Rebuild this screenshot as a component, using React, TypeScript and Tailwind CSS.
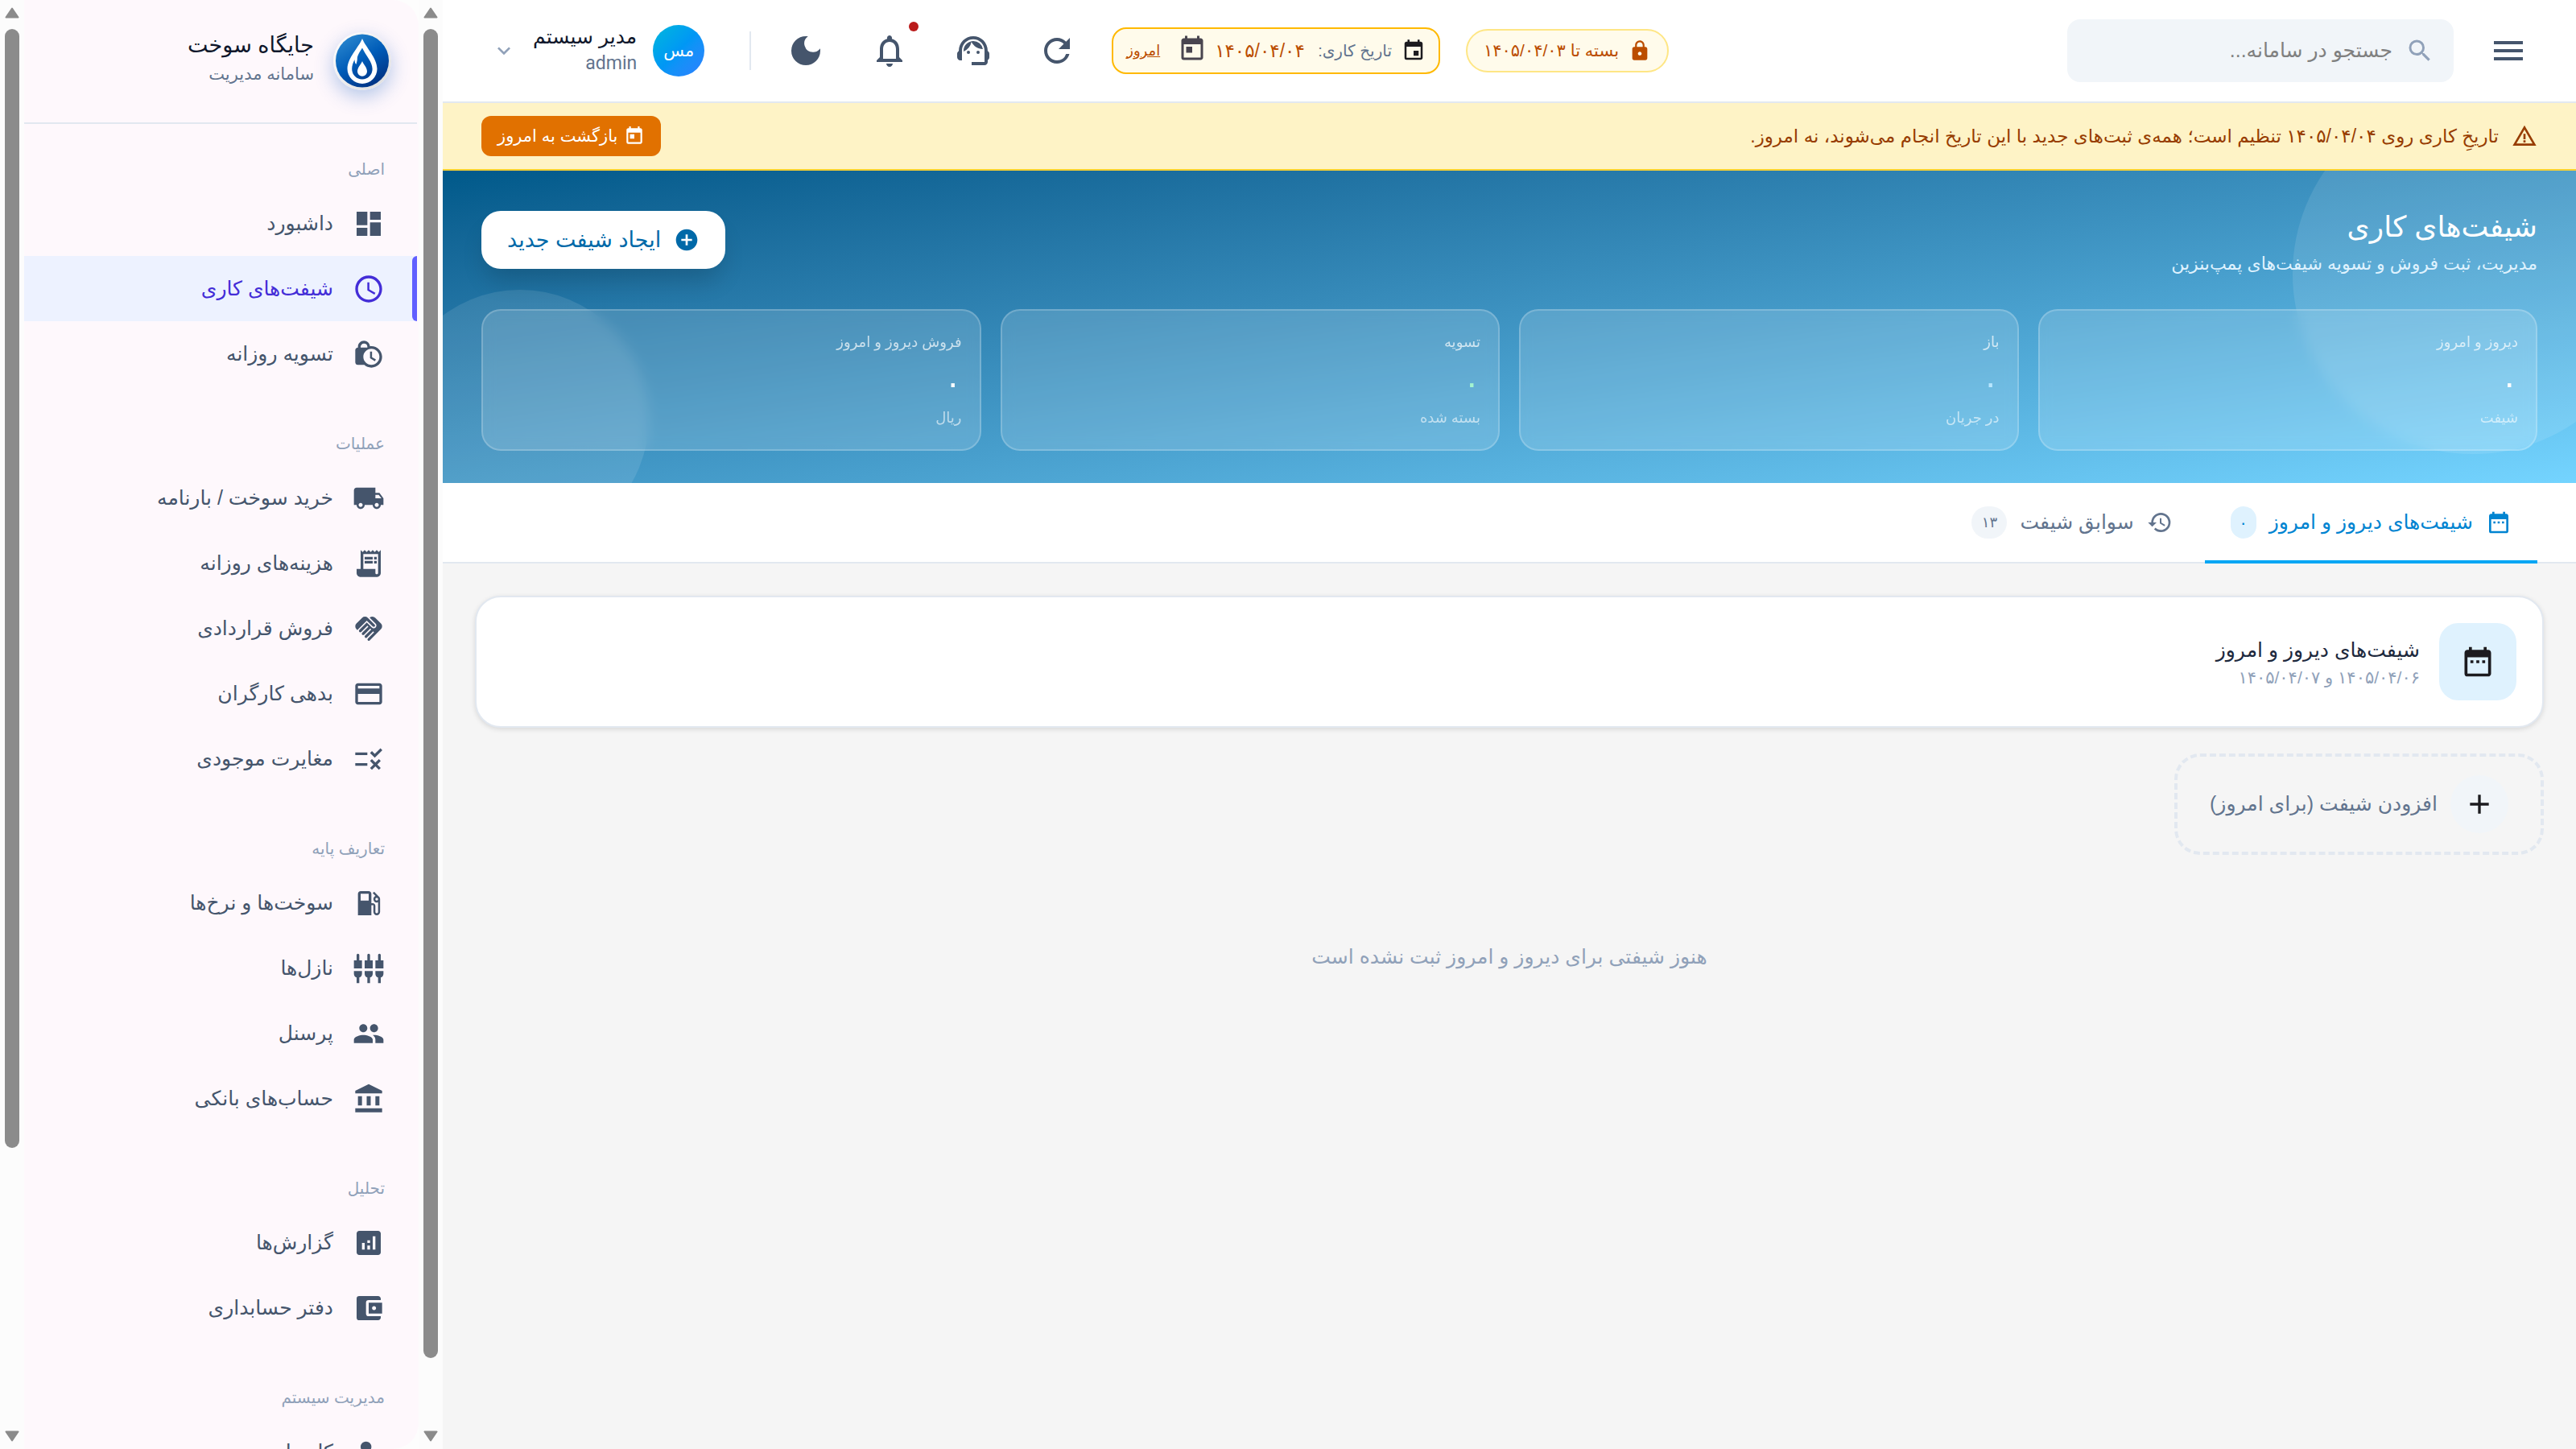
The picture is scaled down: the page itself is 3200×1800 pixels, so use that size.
import React from "react";
import type { IconType } from "react-icons";
import {
  MdAccountBalance,
  MdAccountBalanceWallet,
  MdAdd,
  MdAddCircle,
  MdAnalytics,
  MdCreditCard,
  MdDarkMode,
  MdDashboard,
  MdDateRange,
  MdEvent,
  MdExpandMore,
  MdHandshake,
  MdHistory,
  MdLocalGasStation,
  MdLocalShipping,
  MdLock,
  MdLockClock,
  MdManageAccounts,
  MdMenu,
  MdNotificationsNone,
  MdPeople,
  MdReceiptLong,
  MdRefresh,
  MdRule,
  MdSchedule,
  MdSearch,
  MdSettingsInputComponent,
  MdSupportAgent,
  MdToday,
  MdWarningAmber,
} from "react-icons/md";

type NavItem = { label: string; icon: IconType; active?: boolean };
type NavGroup = { title: string; items: NavItem[] };

const NAV: NavGroup[] = [
  {
    title: "اصلی",
    items: [
      { label: "داشبورد", icon: MdDashboard },
      { label: "شیفت‌های کاری", icon: MdSchedule, active: true },
      { label: "تسویه روزانه", icon: MdLockClock },
    ],
  },
  {
    title: "عملیات",
    items: [
      { label: "خرید سوخت / بارنامه", icon: MdLocalShipping },
      { label: "هزینه‌های روزانه", icon: MdReceiptLong },
      { label: "فروش قراردادی", icon: MdHandshake },
      { label: "بدهی کارگران", icon: MdCreditCard },
      { label: "مغایرت موجودی", icon: MdRule },
    ],
  },
  {
    title: "تعاریف پایه",
    items: [
      { label: "سوخت‌ها و نرخ‌ها", icon: MdLocalGasStation },
      { label: "نازل‌ها", icon: MdSettingsInputComponent },
      { label: "پرسنل", icon: MdPeople },
      { label: "حساب‌های بانکی", icon: MdAccountBalance },
    ],
  },
  {
    title: "تحلیل",
    items: [
      { label: "گزارش‌ها", icon: MdAnalytics },
      { label: "دفتر حسابداری", icon: MdAccountBalanceWallet },
    ],
  },
  {
    title: "مدیریت سیستم",
    items: [{ label: "کاربران", icon: MdManageAccounts }],
  },
];

const STATS = [
  { label: "دیروز و امروز", value: "۰", unit: "شیفت", tone: "text-white" },
  { label: "باز", value: "۰", unit: "در جریان", tone: "text-[#b8e6fe]" },
  { label: "تسویه", value: "۰", unit: "بسته شده", tone: "text-[#a4f4cf]" },
  { label: "فروش دیروز و امروز", value: "۰", unit: "ریال", tone: "text-white" },
];

const HEADER_ACTIONS: { label: string; icon: IconType; dot?: boolean }[] = [
  { label: "بارگذاری دوباره", icon: MdRefresh },
  { label: "پشتیبانی", icon: MdSupportAgent },
  { label: "اعلان‌ها", icon: MdNotificationsNone, dot: true },
  { label: "حالت تیره", icon: MdDarkMode },
];

function Logo() {
  return (
    <svg viewBox="0 0 72 72" className="size-[72px] shrink-0 rounded-full shadow-[0_8px_24px_rgba(0,80,190,0.3)]" aria-hidden="true">
      <defs>
        <linearGradient id="logoBlue" x1="0.15" y1="0" x2="0.75" y2="1">
          <stop offset="0" stopColor="#2d8ad0" />
          <stop offset="0.5" stopColor="#005cb8" />
          <stop offset="1" stopColor="#003080" />
        </linearGradient>
        <linearGradient id="logoRing" x1="0" y1="0" x2="1" y2="1">
          <stop offset="0" stopColor="#ffffff" />
          <stop offset="1" stopColor="#dcdcdc" />
        </linearGradient>
      </defs>
      <circle cx="36" cy="36" r="36" fill="url(#logoRing)" />
      <circle cx="36" cy="35.5" r="33" fill="url(#logoBlue)" />
      <path
        fill="#fff"
        fillRule="evenodd"
        d="M36 8C40.500 19 54.500 32 54.500 45.500A18.500 18.500 0 0 1 17.500 45.500C17.500 32 31.500 19 36 8ZM36 19.500C32 26 29.800 29 29.800 33.500C29.800 35.500 29 38 28.300 40C27 38.500 26.500 36.500 26.500 34C24.500 38 23.200 41.500 23.200 45.800A12.700 12.700 0 0 0 48.600 45.800C48.600 37 40.500 29 36 19.500Z"
      />
      <path fill="#fff" d="M36 36C37.500 40 42 43.500 42 48.800A6 6 0 0 1 30 48.800C30 43.500 34.500 40 36 36Z" />
    </svg>
  );
}

function ScrollTrack({ thumb }: { thumb: string }) {
  return (
    <div aria-hidden="true" className="flex w-[30px] shrink-0 flex-col items-center justify-between bg-[#fcfcfc] py-[9px]">
      <div className="flex min-h-0 flex-1 flex-col items-center gap-[13px]">
        <svg viewBox="0 0 18 14" className="h-[14px] w-[18px] shrink-0">
          <path d="M9 1.500L16.500 12.500H1.500Z" fill="#8b8b8b" stroke="#8b8b8b" strokeWidth="2" strokeLinejoin="round" />
        </svg>
        <div className={"w-[18px] rounded-full bg-[#8b8b8b] " + thumb} />
      </div>
      <svg viewBox="0 0 18 14" className="h-[14px] w-[18px] shrink-0">
        <path d="M9 12.500L16.500 1.500H1.500Z" fill="#8b8b8b" stroke="#8b8b8b" strokeWidth="2" strokeLinejoin="round" />
      </svg>
    </div>
  );
}

function Sidebar() {
  return (
    <aside className="flex h-full shrink-0 bg-[#fdfdfd]">
      <ScrollTrack thumb="h-[93.4%]" />
      <div className="flex w-[490px] flex-col overflow-hidden rounded-r-[32px] bg-[#fef8fc] pr-[2px]">
        <div className="flex h-[154px] shrink-0 items-start gap-6 border-b-2 border-[#e2e8f0] px-8 pt-10">
          <Logo />
          <div className="flex flex-col">
            <span className="text-[27px] leading-[32px] text-[#0f172b]">جایگاه سوخت</span>
            <span className="text-[21px] leading-[40px] text-[#62748e]">سامانه مدیریت</span>
          </div>
        </div>
        <nav className="flex shrink-0 flex-col">
          {NAV.map((group) => (
            <section key={group.title}>
              <h2 className="px-10 pt-10 pb-[11px] text-[20px] leading-[32px] text-[#90a1b9]">{group.title}</h2>
              <ul className="flex flex-col pb-[15px]">
                {group.items.map(({ label, icon: Icon, active }) => (
                  <li key={label}>
                    <a
                      href="#"
                      aria-current={active ? "page" : undefined}
                      className={
                        active
                          ? "relative flex h-[81px] items-center gap-6 bg-[#edf2ff] px-10 text-[25px] text-[#432dd7]"
                          : "relative flex h-[81px] items-center gap-6 px-10 text-[25px] text-[#45556c]"
                      }
                    >
                      {active && <span className="absolute inset-y-0 right-0 w-[6px] rounded-l-md bg-[#615fff]" />}
                      <Icon className="size-10 shrink-0" />
                      <span>{label}</span>
                    </a>
                  </li>
                ))}
              </ul>
            </section>
          ))}
        </nav>
      </div>
      <ScrollTrack thumb="h-[78.6%]" />
    </aside>
  );
}

function Header() {
  return (
    <header className="flex h-32 shrink-0 items-center border-b-2 border-[#e2e8f0] bg-white pr-9 pl-[60px]">
      <button type="button" aria-label="منو" className="grid size-24 place-items-center text-[#45556c]">
        <MdMenu className="size-12" />
      </button>
      <label className="mr-5 flex h-[78px] w-[480px] items-center gap-4 rounded-2xl bg-[#f1f5f9] px-6">
        <MdSearch className="size-9 shrink-0 text-[#90a1b9]" />
        <input
          type="text"
          aria-label="جستجو"
          placeholder="جستجو در سامانه..."
          className="min-w-0 flex-1 bg-transparent text-[25px] text-[#45556c] outline-none placeholder:text-[#808080]"
        />
      </label>
      <div className="flex-1" />
      <span className="flex h-[54px] items-center gap-3 rounded-full border-2 border-[#fee685] bg-[#fffbeb] px-5 text-[21px] text-[#bb4d00]">
        <MdLock className="size-7" />
        بسته تا ۱۴۰۵/۰۴/۰۳
      </span>
      <div className="mr-8 ml-5 flex h-[58px] items-center rounded-[18px] border-2 border-[#ffb900] bg-[#fffbeb] px-4">
        <MdEvent className="size-[30px] text-[#1c1b1f]" />
        <label htmlFor="work-date" className="mr-3 text-[20px] text-[#62748e]">
          تاریخ کاری:
        </label>
        <input
          id="work-date"
          type="text"
          dir="ltr"
          defaultValue="۱۴۰۵/۰۴/۰۴"
          className="mr-3 w-[116px] bg-transparent text-[23px] text-[#bb4d00] outline-none"
        />
        <button type="button" aria-label="انتخاب تاریخ" className="mr-1 grid size-12 place-items-center pb-1 text-[#49454f]">
          <MdToday className="size-9" />
        </button>
        <button type="button" className="mr-4 text-[18px] text-[#bb4d00] underline">
          امروز
        </button>
      </div>
      <div className="flex items-center gap-2">
        {HEADER_ACTIONS.map(({ label, icon: Icon, dot }) => (
          <button key={label} type="button" aria-label={label} className="relative grid size-24 place-items-center text-[#45556c]">
            <Icon className="size-12" />
            {dot && <span className="absolute top-3 right-3 size-3 rounded-full bg-[#ba1a1a]" />}
          </button>
        ))}
      </div>
      <div className="mr-5 h-12 w-[2px] bg-[#e2e8f0]" />
      <button type="button" className="mr-14 flex items-center gap-5">
        <span className="grid size-16 place-items-center rounded-full bg-linear-to-br from-[#00b8db] via-[#0097f5] to-[#2b7fff] text-[21px] text-white">مس</span>
        <span className="flex flex-col items-start">
          <span className="text-[25px] leading-[32px] text-[#0f172b]">مدیر سیستم</span>
          <span className="font-[Roboto,sans-serif] text-[23px] leading-[36px] text-[#62748e]">admin</span>
        </span>
        <MdExpandMore className="size-8 text-[#90a1b9]" />
      </button>
    </header>
  );
}

function DateBanner() {
  return (
    <div className="flex h-[84px] shrink-0 items-center gap-4 border-b-2 border-[#ffd230] bg-[#fef3c6] px-12 text-[#973c00]">
      <MdWarningAmber className="size-8 shrink-0" />
      <p className="flex-1 text-[23px]">
        تاریخِ کاری روی ۱۴۰۵/۰۴/۰۴ تنظیم است؛ همه‌ی ثبت‌های جدید با این تاریخ انجام می‌شوند، نه امروز.
      </p>
      <button type="button" className="flex h-[50px] items-center gap-2 rounded-xl bg-[#e17100] px-5 text-[21px] text-white">
        <MdToday className="size-[26px]" />
        بازگشت به امروز
      </button>
    </div>
  );
}

function Hero() {
  return (
    <section className="relative shrink-0 overflow-hidden bg-linear-to-br from-[#00598a] to-[#74d4ff] px-12 pt-10 pb-10">
      <div className="absolute -top-24 -right-24 size-112 rounded-full bg-white/10" />
      <div className="absolute -bottom-20 -left-16 size-80 rounded-full bg-white/10" />
      <div className="relative flex items-start justify-between">
        <div>
          <h1 className="text-[36px] leading-[60px] text-white">شیفت‌های کاری</h1>
          <p className="text-[22px] leading-[32px] text-[#dff2fe]">مدیریت، ثبت فروش و تسویه شیفت‌های پمپ‌بنزین</p>
        </div>
        <button
          type="button"
          className="mt-[10px] flex h-[72px] items-center gap-4 rounded-3xl bg-white px-8 text-[27px] text-[#0069a8] shadow-[0_20px_30px_-6px_rgba(0,0,0,0.16)]"
        >
          <MdAddCircle className="size-8" />
          ایجاد شیفت جدید
        </button>
      </div>
      <div className="relative mt-[40px] grid grid-cols-4 gap-6">
        {STATS.map((s) => (
          <div key={s.label} className="flex h-[176px] flex-col justify-between rounded-3xl border-2 border-white/20 bg-white/15 p-[22px] backdrop-blur-sm">
            <span className="text-[18px] leading-[34px] text-white/70">{s.label}</span>
            <span className={"pt-2 text-[40px] leading-[48px] " + s.tone}>{s.value}</span>
            <span className="text-[18px] leading-[34px] text-white/60">{s.unit}</span>
          </div>
        ))}
      </div>
    </section>
  );
}

function Tabs() {
  return (
    <div role="tablist" className="flex h-[100px] shrink-0 items-stretch gap-2 border-b-2 border-[#e2e8f0] bg-white px-12">
      <button type="button" role="tab" aria-selected="true" className="relative flex items-center gap-4 px-8 text-[25px] text-[#0084d1]">
        <MdDateRange className="size-8" />
        شیفت‌های دیروز و امروز
        <span className="grid h-10 w-8 place-items-center rounded-full bg-[#dff2fe] text-[20px]">۰</span>
        <span className="absolute inset-x-0 -bottom-[2px] h-1 bg-[#00a6f4]" />
      </button>
      <button type="button" role="tab" aria-selected="false" className="flex items-center gap-4 px-8 text-[25px] text-[#62748e]">
        <MdHistory className="size-8" />
        سوابق شیفت
        <span className="grid h-10 w-11 place-items-center rounded-full bg-[#f1f5f9] text-[18px]">۱۳</span>
      </button>
    </div>
  );
}

export default function App() {
  return (
    <div dir="rtl" className="flex h-screen overflow-hidden bg-[#f5f5f5] font-['Liberation_Sans','DejaVu_Sans',sans-serif]">
      <div className="flex min-w-0 flex-1 flex-col">
        <Header />
        <DateBanner />
        <Hero />
        <Tabs />
        <main className="flex flex-1 flex-col items-start gap-8 p-10">
          <section className="flex w-full items-center gap-6 rounded-[32px] border-2 border-[#e2e8f0] bg-white p-8 shadow-[0_2px_6px_rgba(0,0,0,0.12)]">
            <div className="grid size-24 place-items-center rounded-3xl bg-[#dff2fe] text-[#1c1b1f]">
              <MdDateRange className="size-11" />
            </div>
            <div className="pt-1">
              <h2 className="text-[25px] leading-[36px] text-[#1d293d]">شیفت‌های دیروز و امروز</h2>
              <p className="text-[21px] leading-[34px] text-[#90a1b9]">۱۴۰۵/۰۴/۰۶ و ۱۴۰۵/۰۴/۰۷</p>
            </div>
          </section>
          <button
            type="button"
            className="flex h-[126px] items-center gap-4 rounded-[32px] border-4 border-dashed border-[#e2e8f0] px-10 text-[25px] text-[#62748e]"
          >
            <span className="grid size-[72px] place-items-center rounded-full bg-[#f1f5f9] text-[#1c1b1f]">
              <MdAdd className="size-10" />
            </span>
            افزودن شیفت (برای امروز)
          </button>
          <p className="mt-[74px] w-full text-center text-[25px] leading-[40px] text-[#90a1b9]">هنوز شیفتی برای دیروز و امروز ثبت نشده است</p>
        </main>
      </div>
      <Sidebar />
    </div>
  );
}
